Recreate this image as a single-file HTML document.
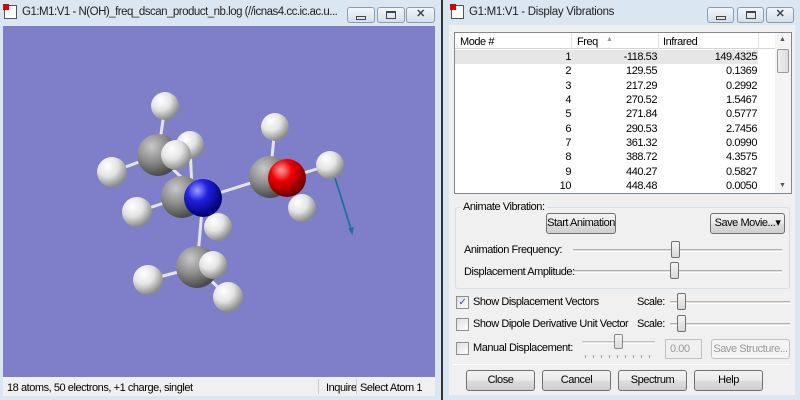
<!DOCTYPE html>
<html><head><style>
*{margin:0;padding:0;box-sizing:border-box}
body{width:800px;height:400px;overflow:hidden;background:#dbe6f3;font-family:"Liberation Sans",sans-serif;font-size:11px;letter-spacing:-0.45px;color:#000;position:relative;white-space:nowrap}
.a{position:absolute}
.tb{position:absolute;top:7px;height:16px;border:1px solid #8e9cb0;border-radius:3px;background:linear-gradient(#f2f6fb,#d5deea)}
.btn{position:absolute;border:1px solid #707070;border-radius:3px;background:linear-gradient(#f2f2f2 0%,#ebebeb 50%,#dddddd 51%,#cfcfcf 100%);text-align:center;font-size:11px;line-height:19px}
.cb{position:absolute;width:13px;height:13px;border:1px solid #8e8f8f;background:linear-gradient(135deg,#dcdcdc,#fff)}
.trk{position:absolute;height:3px;border-top:1px solid #b0b0b0;border-bottom:1px solid #fff;background:#e0e0e0}
.th{position:absolute;width:9px;height:17px;border:1px solid #707070;border-radius:2px;background:linear-gradient(#f4f4f4,#d8d8d8)}
.row{position:absolute;left:456px;width:303px;height:14px;line-height:14px}
.row span{position:absolute;text-align:right}
</style></head><body>
<div class="a" style="left:4px;top:5px;width:13px;height:14px;background:#fff;border:1px solid #555"></div>
<div class="a" style="left:3px;top:4px;width:6px;height:6px;background:#d00"></div>
<div class="a" style="left:22px;top:6px;font-size:11.5px;letter-spacing:-0.5px;color:#222">G1:M1:V1 - N(OH)_freq_dscan_product_nb.log (//icnas4.cc.ic.ac.u...</div>
<div class="tb" style="left:347px;width:28px"><div class="a" style="left:8px;top:8px;width:10px;height:4px;border:1px solid #444"></div></div>
<div class="tb" style="left:377px;width:28px"><div class="a" style="left:8px;top:3px;width:10px;height:8px;border:1px solid #444;border-top-width:2px"></div></div>
<div class="tb" style="left:406px;width:29px;text-align:center;line-height:13px;font-size:11px;font-weight:bold;color:#444">✕</div>
<div class="a" style="left:3px;top:26px;width:432px;height:351px;background:#7f7fc9"></div>
<svg class="a" style="left:3px;top:26px" width="432" height="351" viewBox="3 26 432 351">
<defs>
<radialGradient id="gh" cx="35%" cy="30%" r="70%"><stop offset="0" stop-color="#fff"/><stop offset=".5" stop-color="#e4e4e4"/><stop offset="1" stop-color="#8a8a8a"/></radialGradient>
<radialGradient id="gc" cx="35%" cy="30%" r="70%"><stop offset="0" stop-color="#c8c8c8"/><stop offset=".5" stop-color="#8f8f8f"/><stop offset="1" stop-color="#4a4a4a"/></radialGradient>
<radialGradient id="gn" cx="35%" cy="30%" r="70%"><stop offset="0" stop-color="#9aa0ff"/><stop offset=".4" stop-color="#2020e0"/><stop offset="1" stop-color="#000070"/></radialGradient>
<radialGradient id="go" cx="35%" cy="30%" r="70%"><stop offset="0" stop-color="#ffa0a0"/><stop offset=".4" stop-color="#f00000"/><stop offset="1" stop-color="#700000"/></radialGradient>
</defs>
<g stroke="#e4e4e4" stroke-width="3">
<line x1="165" y1="106" x2="158" y2="155"/><line x1="112" y1="172" x2="158" y2="155"/><line x1="190" y1="145" x2="158" y2="155"/>
<line x1="158" y1="155" x2="203" y2="198"/><line x1="137" y1="212" x2="182" y2="197"/><line x1="190" y1="145" x2="192" y2="190"/>
<line x1="203" y1="198" x2="270" y2="177"/><line x1="203" y1="198" x2="197" y2="267"/>
<line x1="148" y1="280" x2="197" y2="267"/><line x1="228" y1="297" x2="197" y2="267"/>
<line x1="275" y1="127" x2="270" y2="177"/><line x1="287" y1="178" x2="330" y2="165"/>
</g>
<circle cx="165" cy="106" r="14" fill="url(#gh)"/>
<circle cx="190" cy="145" r="14" fill="url(#gh)"/>
<circle cx="158" cy="155" r="21" fill="url(#gc)"/>
<circle cx="112" cy="172" r="15" fill="url(#gh)"/>
<circle cx="176" cy="155" r="15" fill="url(#gh)"/>
<circle cx="182" cy="197" r="21" fill="url(#gc)"/>
<circle cx="137" cy="212" r="15" fill="url(#gh)"/>
<circle cx="218" cy="227" r="14" fill="url(#gh)"/>
<circle cx="203" cy="198" r="19" fill="url(#gn)"/>
<circle cx="197" cy="267" r="21" fill="url(#gc)"/>
<circle cx="148" cy="280" r="15" fill="url(#gh)"/>
<circle cx="213" cy="265" r="14" fill="url(#gh)"/>
<circle cx="228" cy="297" r="15" fill="url(#gh)"/>
<circle cx="275" cy="127" r="14" fill="url(#gh)"/>
<circle cx="270" cy="177" r="21" fill="url(#gc)"/>
<circle cx="302" cy="208" r="14" fill="url(#gh)"/>
<circle cx="287" cy="178" r="19" fill="url(#go)"/>
<circle cx="330" cy="165" r="14" fill="url(#gh)"/>
<line x1="335" y1="178" x2="352" y2="232" stroke="#1f6fa0" stroke-width="1.8"/>
<path d="M349 228 L352 233 L353 227" stroke="#1f6fa0" fill="none" stroke-width="1.5"/>
</svg>
<div class="a" style="left:3px;top:377px;width:432px;height:19px;background:#f0f0f0"></div>
<div class="a" style="left:7px;top:382px;">18 atoms, 50 electrons, +1 charge, singlet</div>
<div class="a" style="left:318px;top:379px;width:1px;height:15px;background:#ccc"></div>
<div class="a" style="left:326px;top:382px;">Inquire</div>
<div class="a" style="left:356px;top:379px;width:1px;height:15px;background:#ccc"></div>
<div class="a" style="left:360px;top:382px;">Select Atom 1</div>
<div class="a" style="left:441px;top:0;width:2px;height:400px;background:#333"></div>
<div class="a" style="left:451px;top:5px;width:13px;height:14px;background:#fff;border:1px solid #555"></div>
<div class="a" style="left:450px;top:4px;width:6px;height:6px;background:#d00"></div>
<div class="a" style="left:469px;top:6px;font-size:11.5px;letter-spacing:-0.3px;color:#222">G1:M1:V1 - Display Vibrations</div>
<div class="tb" style="left:707px;width:27px"><div class="a" style="left:8px;top:8px;width:10px;height:4px;border:1px solid #444"></div></div>
<div class="tb" style="left:737px;width:27px"><div class="a" style="left:8px;top:3px;width:10px;height:8px;border:1px solid #444;border-top-width:2px"></div></div>
<div class="tb" style="left:766px;width:28px;text-align:center;line-height:13px;font-size:11px;font-weight:bold;color:#444">✕</div>
<div class="a" style="left:449px;top:25px;width:346px;height:370px;background:#f0f0f0"></div>
<div class="a" style="left:454px;top:32px;width:338px;height:162px;background:#fff;border:1px solid #828790"></div>
<div class="a" style="left:455px;top:33px;width:320px;height:16px;border-bottom:1px solid #d5d5d5"></div>
<div class="a" style="left:460px;top:36px">Mode #</div>
<div class="a" style="left:571px;top:33px;width:1px;height:16px;background:#e0e0e0"></div>
<div class="a" style="left:577px;top:36px">Freq</div>
<div class="a" style="left:606px;top:36px;font-size:7px;color:#999">▲</div>
<div class="a" style="left:658px;top:33px;width:1px;height:16px;background:#e0e0e0"></div>
<div class="a" style="left:663px;top:36px">Infrared</div>
<div class="a" style="left:758px;top:33px;width:1px;height:16px;background:#e0e0e0"></div>
<div class="a" style="left:775px;top:33px;width:16px;height:160px;background:#f4f4f4"></div>
<div class="a" style="left:779px;top:36px;font-size:7px;color:#555">▲</div>
<div class="a" style="left:779px;top:182px;font-size:7px;color:#555">▼</div>
<div class="a" style="left:777px;top:49px;width:12px;height:24px;border:1px solid #999;border-radius:2px;background:linear-gradient(90deg,#eee,#ddd)"></div>
<div class="a" style="left:455px;top:50px;width:303px;height:14px;background:#e6e6e6"></div>
<div style="position:absolute;left:0;top:0">
<div class="row" style="top:50px"><span style="right:188px">1</span><span style="right:102px">-118.53</span><span style="right:2px">149.4325</span></div>
<div class="row" style="top:64px"><span style="right:188px">2</span><span style="right:102px">129.55</span><span style="right:2px">0.1369</span></div>
<div class="row" style="top:78.5px"><span style="right:188px">3</span><span style="right:102px">217.29</span><span style="right:2px">0.2992</span></div>
<div class="row" style="top:93px"><span style="right:188px">4</span><span style="right:102px">270.52</span><span style="right:2px">1.5467</span></div>
<div class="row" style="top:107px"><span style="right:188px">5</span><span style="right:102px">271.84</span><span style="right:2px">0.5777</span></div>
<div class="row" style="top:121.5px"><span style="right:188px">6</span><span style="right:102px">290.53</span><span style="right:2px">2.7456</span></div>
<div class="row" style="top:136px"><span style="right:188px">7</span><span style="right:102px">361.32</span><span style="right:2px">0.0990</span></div>
<div class="row" style="top:150px"><span style="right:188px">8</span><span style="right:102px">388.72</span><span style="right:2px">4.3575</span></div>
<div class="row" style="top:164.5px"><span style="right:188px">9</span><span style="right:102px">440.27</span><span style="right:2px">0.5827</span></div>
<div class="row" style="top:179px"><span style="right:188px">10</span><span style="right:102px">448.48</span><span style="right:2px">0.0050</span></div>
</div>
<div class="a" style="left:455px;top:207px;width:335px;height:82px;border:1px solid #d5dfe5;border-radius:3px"></div>
<div class="a" style="left:461px;top:201px;background:#f0f0f0;padding:0 2px">Animate Vibration:</div>
<div class="btn" style="left:546px;top:213px;width:70px;height:21px">Start Animation</div>
<div class="btn" style="left:710px;top:213px;width:75px;height:21px">Save Movie...▾</div>
<div class="a" style="left:464px;top:244px">Animation Frequency:</div>
<div class="trk" style="left:573px;top:249px;width:209px"></div>
<div class="th" style="left:671px;top:241px"></div>
<div class="a" style="left:464px;top:266px">Displacement Amplitude:</div>
<div class="trk" style="left:573px;top:270px;width:209px"></div>
<div class="th" style="left:670px;top:262px"></div>
<div class="cb" style="left:456px;top:296px;font-size:10px;line-height:11px;text-align:center;color:#3a4c9a">✓</div>
<div class="a" style="left:473px;top:296px">Show Displacement Vectors</div>
<div class="a" style="left:637px;top:296px">Scale:</div>
<div class="trk" style="left:670px;top:301px;width:120px"></div>
<div class="th" style="left:677px;top:293px"></div>
<div class="cb" style="left:456px;top:318px"></div>
<div class="a" style="left:473px;top:318px">Show Dipole Derivative Unit Vector</div>
<div class="a" style="left:637px;top:318px">Scale:</div>
<div class="trk" style="left:670px;top:323px;width:120px"></div>
<div class="th" style="left:677px;top:315px"></div>
<div class="cb" style="left:456px;top:342px"></div>
<div class="a" style="left:473px;top:342px">Manual Displacement:</div>
<div class="trk" style="left:582px;top:341px;width:73px;opacity:.7"></div>
<div class="th" style="left:614px;top:334px;height:15px;opacity:.8"></div>
<div class="a" style="left:585px;top:355px;width:70px;height:3px;background:repeating-linear-gradient(90deg,#999 0 1px,transparent 1px 8px)"></div>
<div class="a" style="left:665px;top:339px;width:37px;height:20px;border:1px solid #c0c0c0;background:#f0f0f0;color:#999;padding:3px 0 0 4px">0.00</div>
<div class="btn" style="left:711px;top:339px;width:79px;height:20px;border-color:#c0c0c0;background:#f4f4f4;color:#999">Save Structure...</div>
<div class="a" style="left:453px;top:364px;width:338px;height:1px;background:#a0a0a0;border-bottom:1px solid #fff"></div>
<div class="btn" style="left:466px;top:370px;width:69px;height:21px">Close</div>
<div class="btn" style="left:542px;top:370px;width:69px;height:21px">Cancel</div>
<div class="btn" style="left:618px;top:370px;width:69px;height:21px">Spectrum</div>
<div class="btn" style="left:694px;top:370px;width:69px;height:21px">Help</div>
</body></html>
